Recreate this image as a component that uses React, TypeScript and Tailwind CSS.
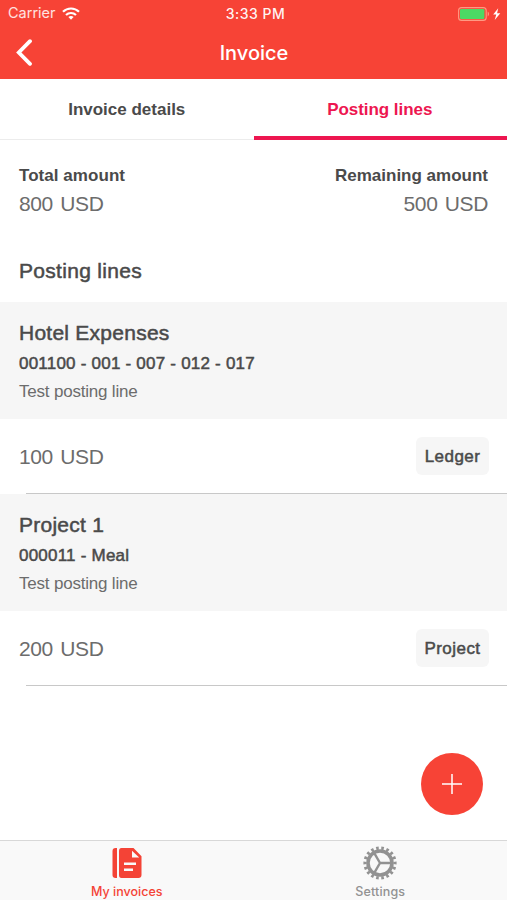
const postingLines = [
  {
    title: 'Hotel Expenses',
    account: '001100 - 001 - 007 - 012 - 017',
    description: 'Test posting line',
    amount: '100 USD',
    type: 'Ledger',
  },
  {
    title: 'Project 1',
    account: '000011 - Meal',
    description: 'Test posting line',
    amount: '200 USD',
    type: 'Project',
  },
];

function StatusBar() {
  return (
    <div className="grid h-[27px] grid-cols-3 items-center pl-2 pr-1.5 text-[15px] leading-none text-white">
      <div className="flex items-center gap-1.5">
        <span className="text-[14.5px] text-white/85">Carrier</span>
        <svg width="18" height="13" viewBox="0 0 18 13" fill="none" stroke="white" strokeWidth="2.2">
          <path d="M1 4.8C5.4.4 12.6.4 17 4.8" />
          <path d="M4 8C6.8 5.3 11.2 5.3 14 8" />
          <path d="M6.4 10C7.8 8.7 10.2 8.7 11.6 10L9 12.7Z" fill="white" stroke="none" />
        </svg>
      </div>
      <span className="pl-0.5 text-center text-sm font-medium tracking-[0.5px] text-white/95">3:33 PM</span>
      <div className="flex items-center justify-end">
        <svg width="43" height="14" viewBox="0 0 43 14">
          <rect x="0.6" y="0.6" width="27.6" height="12.8" rx="3" fill="none" stroke="#ff9a83" strokeWidth="1.1" />
          <rect x="2" y="2" width="24.4" height="10" rx="1.2" fill="#4cd964" />
          <path d="M29.7 4.6C31.4 5.3 31.4 8.7 29.7 9.4Z" fill="#ff9a83" />
          <path d="M40.2 1.2L35.2 7.6H38.3L36.7 13L42.3 6.2H39.1Z" fill="white" />
        </svg>
      </div>
    </div>
  );
}

function InvoicesIcon() {
  return (
    <svg width="30" height="30" viewBox="0 0 30 30" fill="#f44336">
      <path d="M3.5 0H5V30H3.5C1.6 30 .5 28.8 .5 27V3C.5 1.2 1.6 0 3.5 0Z" />
      <path
        fillRule="evenodd"
        d="M9.5 0H21.5L29.5 8.3V27C29.5 28.8 28.3 30 26.5 30H9.5C7.8 30 7 28.8 7 27V3C7 1.2 7.8 0 9.5 0ZM20 2.8V9.5H27.2ZM12 14.6V17H24V14.6ZM12 20.6V23H21V20.6Z"
      />
    </svg>
  );
}

function SettingsIcon() {
  return (
    <svg width="34" height="34" viewBox="0 0 34 34" fill="none" stroke="#929292">
      <circle cx="17" cy="17" r="12" strokeWidth="3.6" />
      <circle cx="17" cy="17" r="15" strokeWidth="3.2" pathLength="180" strokeDasharray="5 5" strokeDashoffset="2.5" />
      <path d="M17 17H29M17 17L11 6.6M17 17L11 27.4" strokeWidth="2.4" />
    </svg>
  );
}

export default function App() {
  return (
    <div className="relative flex h-[900px] w-[507px] flex-col overflow-hidden bg-white font-['Liberation_Sans',sans-serif] text-[#4a4a4a]">
      <header className="h-[79px] shrink-0 bg-[#f74336] font-['Inter',sans-serif]">
        <StatusBar />
        <div className="grid h-[51px] grid-cols-[40px_1fr_40px] items-center text-white">
          <svg className="ml-4" width="17" height="27" viewBox="0 0 17 27" fill="none" stroke="white" strokeWidth="3.8">
            <path d="M14 2.2L2.8 13.5L14 24.8" strokeLinecap="round" />
          </svg>
          <h1 className="pl-px text-center text-[20px] font-medium">Invoice</h1>
        </div>
      </header>

      <nav className="grid h-[61px] shrink-0 grid-cols-2 text-center text-[17px] font-bold">
        <button className="border-b border-[#ececec] pt-0.5">Invoice details</button>
        <button className="border-b-4 border-[#ed1650] pr-px pt-[5px] tracking-[-0.05px] text-[#ed1650]">Posting lines</button>
      </nav>

      <main className="flex-1">
        <section className="flex justify-between px-[19px] pt-[25px]">
          <div>
            <h2 className="text-[17px] font-bold leading-[22px] tracking-[0.05px]">Total amount</h2>
            <p className="pt-[3px] text-[21px] leading-7 tracking-[-0.4px] text-[#6c6c6c] [word-spacing:2px]">800 USD</p>
          </div>
          <div className="text-right">
            <h2 className="text-[17px] font-bold leading-[22px]">Remaining amount</h2>
            <p className="pt-[3px] text-[21px] leading-7 tracking-[-0.4px] text-[#6c6c6c] [word-spacing:2px]">500 USD</p>
          </div>
        </section>

        <h2 className="px-[19px] pb-[17px] pt-[39px] text-[21px] leading-7 tracking-[0.3px] [-webkit-text-stroke:0.5px_#4a4a4a]">
          Posting lines
        </h2>

        {postingLines.map((line) => (
          <article key={line.title}>
            <div className="h-[117px] bg-[#f6f6f6] px-[19px] pt-[17px]">
              <h3 className="text-[21px] leading-7 tracking-[0.25px] [-webkit-text-stroke:0.5px_#4a4a4a]">{line.title}</h3>
              <p className="pt-1.5 text-[17px] leading-[22px] tracking-[0.22px] [-webkit-text-stroke:0.5px_#4a4a4a]">
                {line.account}
              </p>
              <p className="pt-1.5 text-[17px] leading-[22px] tracking-[-0.2px] text-[#6c6c6c]">{line.description}</p>
            </div>
            <div className="flex h-[74px] items-center justify-between pl-[19px] pr-[18px]">
              <span className="pt-px text-[21px] tracking-[-0.4px] text-[#6c6c6c] [word-spacing:2px]">{line.amount}</span>
              <span className="flex h-[38px] w-[73px] items-center justify-center rounded-md bg-[#f6f6f6] pt-0.5 text-[17px] tracking-[0.45px] [-webkit-text-stroke:0.5px_#4a4a4a]">
                {line.type}
              </span>
            </div>
            <div className="ml-[26px] h-px bg-[#c8c8c8]" />
          </article>
        ))}
      </main>

      <button className="absolute left-[421px] top-[753px] flex size-[62px] items-center justify-center rounded-full bg-[#f74336]">
        <svg width="20" height="20" viewBox="0 0 20 20" stroke="white" strokeWidth="1.5">
          <path d="M10 0V20M0 10H20" />
        </svg>
      </button>

      <footer className="grid h-[60px] shrink-0 grid-cols-2 border-t border-[#d8d8d8] bg-[#f9f9f9] font-['Inter',sans-serif] text-[12.5px] font-medium leading-4">
        <div className="flex flex-col items-center pt-[7px] text-[#f44336]">
          <InvoicesIcon />
          <span className="pt-1.5">My invoices</span>
        </div>
        <div className="flex flex-col items-center pt-[5px] text-[#929292]">
          <SettingsIcon />
          <span className="pt-1 tracking-[0.15px]">Settings</span>
        </div>
      </footer>
    </div>
  );
}
